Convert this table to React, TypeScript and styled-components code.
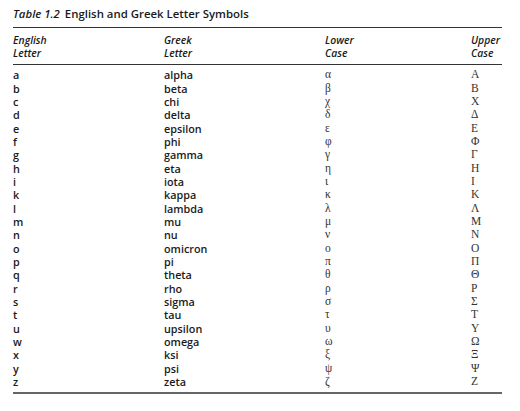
import React from 'react';
import styled, { createGlobalStyle } from 'styled-components';

const GlobalStyle = createGlobalStyle`
  html, body {
    margin: 0;
    padding: 0;
    background: #ffffff;
  }
`;

const COLUMNS = '151px 161px 146px 31px';

const rows: [string, string, string, string][] = [
  ['a', 'alpha', 'α', 'Α'],
  ['b', 'beta', 'β', 'Β'],
  ['c', 'chi', 'χ', 'Χ'],
  ['d', 'delta', 'δ', 'Δ'],
  ['e', 'epsilon', 'ε', 'Ε'],
  ['f', 'phi', 'φ', 'Φ'],
  ['g', 'gamma', 'γ', 'Γ'],
  ['h', 'eta', 'η', 'Η'],
  ['i', 'iota', 'ι', 'Ι'],
  ['k', 'kappa', 'κ', 'Κ'],
  ['l', 'lambda', 'λ', 'Λ'],
  ['m', 'mu', 'μ', 'Μ'],
  ['n', 'nu', 'ν', 'Ν'],
  ['o', 'omicron', 'ο', 'Ο'],
  ['p', 'pi', 'π', 'Π'],
  ['q', 'theta', 'θ', 'Θ'],
  ['r', 'rho', 'ρ', 'Ρ'],
  ['s', 'sigma', 'σ', 'Σ'],
  ['t', 'tau', 'τ', 'Τ'],
  ['u', 'upsilon', 'υ', 'Υ'],
  ['w', 'omega', 'ω', 'Ω'],
  ['x', 'ksi', 'ξ', 'Ξ'],
  ['y', 'psi', 'ψ', 'Ψ'],
  ['z', 'zeta', 'ζ', 'Ζ'],
];

const Page = styled.div`
  width: 489px;
  padding: 7px 0 0 13px;
  font-family: 'Open Sans', 'Liberation Sans', sans-serif;
  color: #1a1a1a;
`;

const Caption = styled.div`
  font-size: 11.4px;
  font-weight: 600;
  line-height: 14px;
  margin-bottom: 6px;
  em {
    font-style: italic;
    margin-right: 5px;
  }
`;

const Table = styled.div`
  border-top: 1px solid #333333;
  border-bottom: 2px solid #666666;
  padding-bottom: 4px;
`;

const HeaderRow = styled.div`
  display: grid;
  grid-template-columns: ${COLUMNS};
  border-bottom: 1px solid #333333;
  padding: 6px 0 4px;
`;

const HeaderCell = styled.div`
  font-size: 10.4px;
  font-weight: 600;
  font-style: italic;
  line-height: 13px;
`;

const BodyRows = styled.div`
  padding-top: 3px;
`;

const Row = styled.div`
  display: grid;
  grid-template-columns: ${COLUMNS};
  height: 13.35px;
  align-items: center;
`;

const Cell = styled.div`
  font-size: 10.8px;
  font-weight: 600;
  line-height: 11px;
`;

const Symbol = styled.div`
  font-family: 'Liberation Serif', 'DejaVu Serif', serif;
  font-size: 11.5px;
  line-height: 11px;
  color: #333333;
`;

export default function App() {
  return (
    <Page>
      <GlobalStyle />
      <Caption>
        <em>Table 1.2</em>English and Greek Letter Symbols
      </Caption>
      <Table>
        <HeaderRow>
          <HeaderCell>English<br />Letter</HeaderCell>
          <HeaderCell>Greek<br />Letter</HeaderCell>
          <HeaderCell>Lower<br />Case</HeaderCell>
          <HeaderCell>Upper<br />Case</HeaderCell>
        </HeaderRow>
        <BodyRows>
          {rows.map(([en, name, lower, upper]) => (
            <Row key={en}>
              <Cell>{en}</Cell>
              <Cell>{name}</Cell>
              <Symbol>{lower}</Symbol>
              <Symbol>{upper}</Symbol>
            </Row>
          ))}
        </BodyRows>
      </Table>
    </Page>
  );
}
